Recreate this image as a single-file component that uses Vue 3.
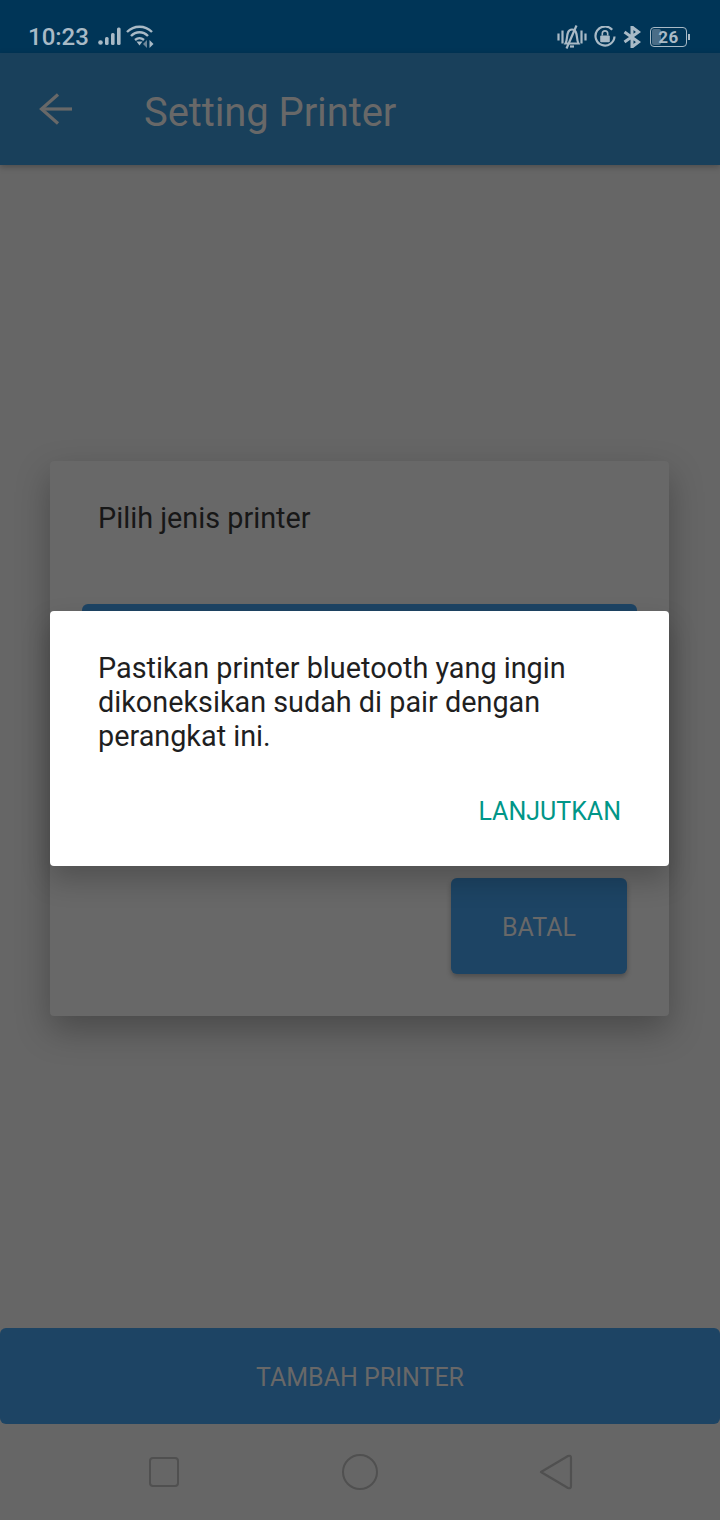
<template>
  <div class="screen">
    <div class="statusbar">
      <div class="status-left">
        <span class="time">10:23</span>
        <svg class="signal" width="23" height="19" viewBox="0 0 23 19">
          <circle cx="2.5" cy="15.5" r="2.3" fill="#a9bac6" />
          <rect x="7" y="10" width="3.6" height="8" rx="1.5" fill="#a9bac6" />
          <rect x="13" y="6" width="3.6" height="12" rx="1.5" fill="#a9bac6" />
          <rect x="19" y="0.5" width="3.6" height="17.5" rx="1.5" fill="#a9bac6" />
        </svg>
        <svg class="wifi" width="30" height="24" viewBox="0 0 30 24" fill="none" stroke="#a9bac6" stroke-width="2.4">
          <path d="M1 7 C8 0 19 0 26 7" />
          <path d="M5 11 C10 6 17 6 22 11" />
          <path d="M9 15 C12 12.5 15 12.5 18 15" />
          <path d="M10.5 16.5 L13.5 20.5 L16.5 16.5 Z" fill="#a9bac6" stroke="none" />
          <path d="M21 15 V23 L17 19 Z" fill="#6f8799" stroke="none" />
          <path d="M23.5 15 V23 L27.5 19 Z" fill="#a9bac6" stroke="none" />
        </svg>
      </div>
      <div class="status-right">
        <svg class="bell" width="30" height="24" viewBox="0 0 30 24" fill="none" stroke="#a9bac6" stroke-width="2.2">
          <path d="M1.5 8.5 V15.5 M5.5 5.5 V18.5 M24.5 5.5 V18.5 M28.5 8.5 V15.5" />
          <path d="M8.5 18.5 C10.5 15 9.5 11 11 7.5 C12.5 3.5 17.5 3.5 19 7.5 C20.5 11 19.5 15 21.5 18.5 Z" />
          <path d="M13 21.5 H17" />
          <path d="M19.5 0.5 L9.5 23.5" />
        </svg>
        <svg class="lock" width="22" height="21" viewBox="0 0 22 21" fill="none">
          <path d="M18.2 3.8 A9.5 9.5 0 1 0 20.5 10.5" stroke="#a9bac6" stroke-width="2.2" />
          <rect x="6.2" y="9.5" width="9.6" height="6.8" rx="1" fill="#a9bac6" />
          <path d="M8.3 9.5 V7.6 A2.7 2.7 0 0 1 13.7 7.6 V9.5" stroke="#a9bac6" stroke-width="1.6" />
        </svg>
        <svg class="bt" width="18" height="22" viewBox="0 0 18 22" fill="none" stroke="#a9bac6" stroke-width="3">
          <path d="M1.5 6 L15.5 16 L9 21 V1 L15.5 6 L1.5 16" />
        </svg>
        <div class="battery">
          <div class="battery-body">
            <div class="battery-fill"></div>
            <span class="battery-text">26</span>
          </div>
          <div class="battery-tip"></div>
        </div>
      </div>
    </div>

    <header class="appbar">
      <svg class="back" width="34" height="32" viewBox="0 0 34 32" fill="none" stroke="#686868" stroke-width="3.2">
        <path d="M33 16 H2.5" />
        <path d="M19 1.5 L2.5 16 L19 30.5" />
      </svg>
      <span class="title">Setting Printer</span>
    </header>

    <main class="content">
      <div class="card">
        <div class="card-title">Pilih jenis printer</div>
        <div class="choice"></div>
        <div class="choice"></div>
        <div class="cancel-row">
          <div class="cancel">BATAL</div>
        </div>
      </div>
    </main>

    <div class="add-btn">TAMBAH PRINTER</div>

    <nav class="navbar">
      <svg width="32" height="32" viewBox="0 0 32 32" fill="none" stroke="#505050" stroke-width="2">
        <rect x="2" y="2" width="28" height="28" rx="3" />
      </svg>
      <svg width="38" height="38" viewBox="0 0 38 38" fill="none" stroke="#505050" stroke-width="2">
        <circle cx="19" cy="19" r="17" />
      </svg>
      <svg width="34" height="36" viewBox="0 0 34 36" fill="none" stroke="#505050" stroke-width="2.2" stroke-linejoin="round">
        <path d="M2 18 L29 2 Q32 1 32 4 V32 Q32 35 29 34 Z" />
      </svg>
    </nav>

    <div class="dialog">
      <p class="dialog-text">Pastikan printer bluetooth yang ingin dikoneksikan sudah di pair dengan perangkat ini.</p>
      <div class="dialog-actions">
        <span class="dialog-btn">LANJUTKAN</span>
      </div>
    </div>
  </div>
</template>

<script setup>
</script>

<style>
body {
  background: #666666;
}
</style>

<style scoped>
.screen {
  position: relative;
  width: 720px;
  height: 1520px;
  display: flex;
  flex-direction: column;
  background: #666666;
  font-family: Roboto, "Liberation Sans", sans-serif;
  overflow: hidden;
}
.statusbar {
  height: 53px;
  flex: none;
  background: #003557;
  display: flex;
  align-items: center;
  justify-content: space-between;
  padding: 20px 30px 0 28px;
  box-sizing: border-box;
}
.status-left,
.status-right {
  display: flex;
  align-items: center;
}
.time {
  color: #a9bac6;
  font-size: 24px;
  font-weight: 500;
}
.signal {
  margin-left: 9px;
}
.wifi {
  margin-left: 5px;
}
.lock {
  margin-left: 7px;
}
.bt {
  margin-left: 7px;
}
.battery {
  display: flex;
  align-items: center;
  margin-left: 9px;
}
.battery-body {
  position: relative;
  width: 37px;
  height: 20px;
  box-sizing: border-box;
  border: 1.5px solid #a9bac6;
  border-radius: 4px;
  display: flex;
  align-items: center;
  justify-content: center;
}
.battery-fill {
  position: absolute;
  left: 1px;
  top: 1px;
  bottom: 1px;
  width: 9px;
  background: #4a6d87;
  border-radius: 2px;
}
.battery-text {
  position: relative;
  color: #a9bac6;
  font-size: 17px;
  font-weight: 700;
  letter-spacing: 0.5px;
}
.battery-tip {
  width: 2px;
  height: 6px;
  margin-left: 1px;
  background: #a9bac6;
}
.appbar {
  height: 112px;
  flex: none;
  background: #19405b;
  display: flex;
  align-items: center;
  padding-left: 39px;
  box-sizing: border-box;
  box-shadow: 0 2px 6px rgba(0, 0, 0, 0.25);
  z-index: 1;
}
.back {
  flex: none;
}
.title {
  margin: 6px 0 0 71px;
  color: #686868;
  font-size: 40px;
  letter-spacing: -0.1px;
}
.content {
  flex: 1;
  padding: 296px 51px 0 50px;
  box-sizing: border-box;
}
.card {
  height: 555px;
  background: #686868;
  border-radius: 4px;
  box-sizing: border-box;
  padding: 0 42px 42px 32px;
  display: flex;
  flex-direction: column;
  box-shadow: 0 14px 34px rgba(0, 0, 0, 0.28);
}
.card-title {
  margin: 40px 0 0 16px;
  color: #171717;
  font-size: 28.8px;
  line-height: 34px;
}
.choice {
  height: 96px;
  flex: none;
  margin: 69px -10px 0 0;
  background: #1d4464;
  border-radius: 6px;
}
.choice + .choice {
  margin-top: 16px;
}
.cancel-row {
  margin-top: auto;
  display: flex;
  justify-content: flex-end;
}
.cancel {
  width: 176px;
  height: 96px;
  padding-top: 3px;
  box-sizing: border-box;
  background: #1d4464;
  border-radius: 6px;
  color: #686868;
  font-size: 25px;
  display: flex;
  align-items: center;
  justify-content: center;
  box-shadow: 0 3px 5px rgba(0, 0, 0, 0.25);
}
.add-btn {
  height: 96px;
  flex: none;
  margin-top: auto;
  padding-top: 3px;
  box-sizing: border-box;
  background: #1d4464;
  border-radius: 6px;
  color: #686868;
  font-size: 25px;
  display: flex;
  align-items: center;
  justify-content: center;
}
.navbar {
  height: 96px;
  flex: none;
  display: flex;
  align-items: center;
  justify-content: space-between;
  padding: 0 147px 0 148px;
  box-sizing: border-box;
}
.dialog {
  position: absolute;
  left: 50px;
  top: 611px;
  width: 619px;
  height: 255px;
  box-sizing: border-box;
  background: #ffffff;
  border-radius: 4px;
  padding: 40px 48px 0 48px;
  box-shadow: 0 14px 28px rgba(0, 0, 0, 0.22);
}
.dialog-text {
  margin: 0;
  color: #1f1f1f;
  font-size: 28.8px;
  line-height: 34px;
}
.dialog-actions {
  display: flex;
  justify-content: flex-end;
  margin-top: 44px;
}
.dialog-btn {
  color: #009688;
  font-size: 25px;
}
</style>
